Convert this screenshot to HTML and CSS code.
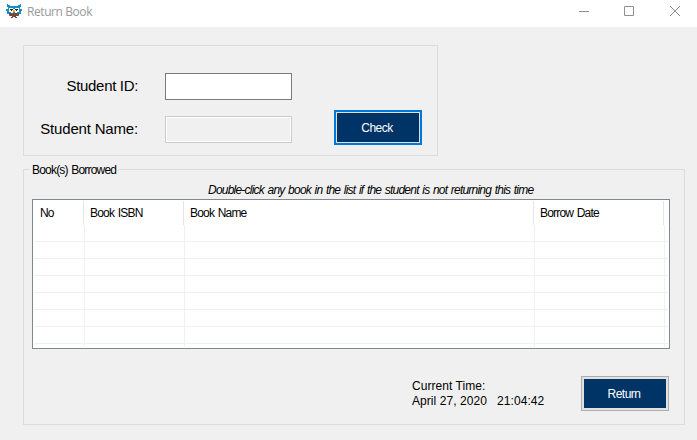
FILE: index.html
```html
<!DOCTYPE html>
<html lang="en">
<head>
<meta charset="utf-8">
<title>Return Book</title>
<link rel="stylesheet" href="styles.css">
</head>
<body>
<header class="titlebar">
  <svg class="owl" width="16" height="16" viewBox="0 0 16 16" shape-rendering="crispEdges">
    <path fill="#168fc6" d="M1 0h1v1h2v1h8V1h2V0h1v3h-1v2h2v2h-1v3h-2v2H3v-2H1V7H0V5h2V3H1z"/>
    <path fill="#fff" d="M3 4h4v1h2V4h4v4h-2v1H9V8H7v1H5V8H3z"/>
    <path fill="#222" d="M4 5h3v1H4zM9 5h3v1H9zM5 6h1v1H5zM10 6h1v1h-1z"/>
    <path fill="#f5a623" d="M7 6h2v2H7z"/>
    <path fill="#7b4938" d="M3 9h10v2h-1v1h-2v1h1v1h-2v-1H7v1H5v-1h1v-1H4v-1H3z"/>
  </svg>
  <h1 class="title">Return Book</h1>
  <svg class="controls" width="102" height="12" viewBox="0 0 102 12">
    <path d="M0 6.500h10M45.500 1.500h9v9h-9zM91 1l10 10M101 1L91 11" fill="none" stroke="#8f8f8f"/>
  </svg>
</header>
<main class="content">
  <section class="student">
    <label class="label" for="sid">Student ID:</label>
    <input class="field" id="sid" type="text">
    <label class="label label-name" for="sname">Student Name:</label>
    <input class="field field-disabled" id="sname" type="text" disabled>
    <button class="button button-default">Check</button>
  </section>
  <section class="borrowed">
    <h2 class="legend">Book(s) Borrowed</h2>
    <p class="hint">Double-click any book in the list if the student is not returning this time</p>
    <div class="list">
      <div class="head">
        <div>No</div><div>Book ISBN</div><div>Book Name</div><div>Borrow Date</div>
      </div>
      <div class="rows">
        <div class="row"><i></i><i></i><i></i><i></i></div>
        <div class="row"><i></i><i></i><i></i><i></i></div>
        <div class="row"><i></i><i></i><i></i><i></i></div>
        <div class="row"><i></i><i></i><i></i><i></i></div>
        <div class="row"><i></i><i></i><i></i><i></i></div>
        <div class="row"><i></i><i></i><i></i><i></i></div>
        <div class="row"><i></i><i></i><i></i><i></i></div>
        <div class="row row-last"><i></i><i></i><i></i><i></i></div>
      </div>
    </div>
    <footer class="footer">
      <div class="clock"><div>Current Time:</div><div>April 27, 2020 &nbsp; 21:04:42</div></div>
      <button class="button">Return</button>
    </footer>
  </section>
</main>
</body>
</html>
```

FILE: styles.css
```css
* { box-sizing: border-box; }
body {
  margin: 0;
  width: 697px;
  height: 440px;
  overflow: hidden;
  background: #f0f0f0;
  color: #000;
  font: 12px/15px "Liberation Sans", Arial, sans-serif;
}
h1, h2, p { margin: 0; font-size: inherit; font-weight: normal; white-space: nowrap; }
.titlebar {
  display: flex;
  height: 27px;
  padding: 4px 16px 0 6px;
  background: #fff;
}
.title {
  margin-left: 5px;
  font: 12px/16px "Open Sans", sans-serif;
  letter-spacing: -0.42px;
  color: #999;
}
.controls { margin: 1px 0 0 auto; }
.content { padding: 18px 12px 0 23px; }
.student {
  display: grid;
  grid-template-columns: 114px 154px 1fr;
  grid-template-rows: 27px 27px;
  row-gap: 16px;
  width: 415px;
  height: 111px;
  padding: 27px 0 0;
  border: 1px solid #dcdcdc;
}
.label {
  grid-column: 1;
  text-align: right;
  font-size: 15px;
  line-height: 26px;
  letter-spacing: -0.33px;
  white-space: nowrap;
}
.label-name { letter-spacing: -0.18px; }
.field {
  width: 127px;
  height: 27px;
  margin: 0 0 0 27px;
  padding: 2px;
  border: 1px solid #7a7a7a;
  background: #fff;
}
.field-disabled {
  border-color: #ccc;
  background: #f0f0f0;
  box-shadow: inset 0 0 0 1px #fff;
}
.button {
  width: 88px;
  height: 35px;
  padding: 2px 2px 0 0;
  border: 1px solid #adadad;
  background: #036;
  box-shadow: inset 0 0 0 2px #e1e1e1;
  color: #fff;
  font: 12px/15px "Liberation Sans", Arial, sans-serif;
  letter-spacing: -0.5px;
}
.button-default {
  grid-column: 3;
  margin: -6px 0 0 42px;
  border: 2px solid #0078d7;
  box-shadow: inset 0 0 0 1px #e1e1e1;
}
.borrowed {
  width: 662px;
  height: 256px;
  margin-top: 13px;
  padding-left: 8px;
  border: 1px solid #dcdcdc;
}
.legend {
  width: 88px;
  height: 15px;
  margin: -7px 0 0 -2px;
  padding-left: 2px;
  background: #f0f0f0;
  letter-spacing: -0.8px;
  word-spacing: 1px;
}
.hint {
  height: 15px;
  margin-top: 5px;
  padding-left: 176px;
  font-style: italic;
  letter-spacing: -0.78px;
  word-spacing: 1px;
}
.list {
  width: 638px;
  height: 150px;
  margin-top: 1px;
  padding: 1px;
  border: 1px solid #828790;
  background: #fff;
}
.head {
  display: grid;
  grid-template-columns: 50px 100px 350px 130px;
  height: 24px;
  line-height: 24px;
}
.head div {
  padding-left: 6px;
  border-right: 1px solid #e5e5e5;
  letter-spacing: -0.8px;
  word-spacing: 1px;
  white-space: nowrap;
}
.row {
  display: grid;
  grid-template-columns: 51px 100px 350px 130px;
  height: 17px;
  border-bottom: 1px solid #f0f0f0;
}
.row i { border-right: 1px solid #f0f0f0; }
.row-last { height: 3px; border-bottom: 0; }
.footer { display: flex; padding-top: 27px; }
.clock {
  width: 169px;
  margin: 3px 0 0 380px;
  letter-spacing: 0.06px;
}
```
